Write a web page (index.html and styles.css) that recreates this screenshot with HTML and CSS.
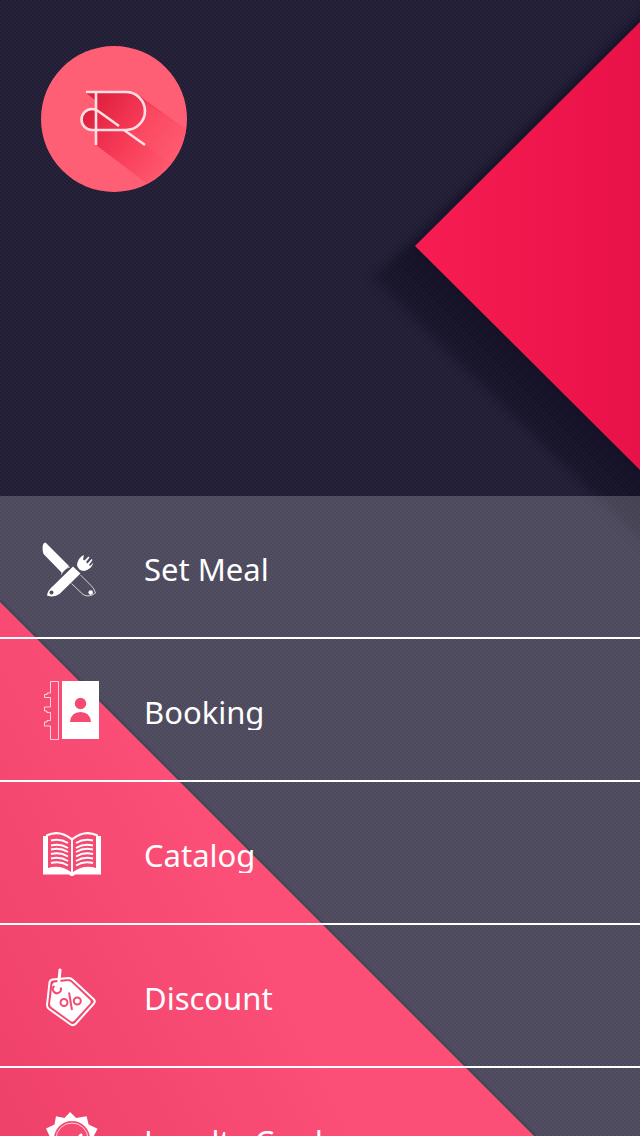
FILE: index.html
```html
<!DOCTYPE html>
<html lang="en">
<head>
<meta charset="utf-8">
<meta name="viewport" content="width=device-width, initial-scale=1">
<title>Menu</title>
<link rel="stylesheet" href="styles.css">
</head>
<body>
<div class="screen">
  <svg class="backdrop" viewBox="0 0 640 1136" preserveAspectRatio="xMidYMid slice" aria-hidden="true">
    <defs>
      <pattern id="weave" width="4" height="4" patternUnits="userSpaceOnUse">
        <rect width="4" height="4" fill="#27243c"/>
        <rect width="2" height="2" fill="#1f1c33"/>
        <rect x="2" y="2" width="2" height="2" fill="#1f1c33"/>
      </pattern>
      <linearGradient id="rightRed" x1="0" y1="0" x2="1" y2="0">
        <stop offset="0" stop-color="#f71d52"/>
        <stop offset="1" stop-color="#e81148"/>
      </linearGradient>
      <linearGradient id="leftRed" gradientUnits="userSpaceOnUse" x1="0" y1="1136" x2="300" y2="980">
        <stop offset="0" stop-color="#eb1245"/>
        <stop offset="1" stop-color="#fb2456"/>
      </linearGradient>
      <linearGradient id="shade" gradientUnits="userSpaceOnUse" x1="528" y1="358" x2="490" y2="396">
        <stop offset="0" stop-color="#110e22" stop-opacity=".75"/>
        <stop offset="1" stop-color="#110e22" stop-opacity=".4"/>
      </linearGradient>
      <filter id="soft" x="-20%" y="-20%" width="140%" height="140%" color-interpolation-filters="sRGB"><feGaussianBlur stdDeviation="5"/></filter>
    </defs>
    <rect width="640" height="1136" fill="url(#weave)"/>
    <path d="M414 240L660 -5V560L372 277Z" fill="url(#shade)" filter="url(#soft)"/>
    <path d="M415 246L640 22V470Z" fill="url(#rightRed)"/>
    <path d="M0 601L535 1136" stroke="#110e22" stroke-width="4" opacity=".5"/>
    <path d="M0 602L534 1136H0Z" fill="url(#leftRed)"/>
  </svg>

  <header class="hero">
    <svg class="logo" viewBox="0 0 146 146" role="img" aria-label="R logo">
      <defs>
        <clipPath id="disc"><circle cx="73" cy="73" r="72"/></clipPath>
        <linearGradient id="cast" gradientUnits="userSpaceOnUse" x1="50" y1="60" x2="132" y2="122">
          <stop offset="0" stop-color="#df2140"/>
          <stop offset=".5" stop-color="#f83c58"/>
          <stop offset="1" stop-color="#ff5b70"/>
        </linearGradient>
      </defs>
      <circle cx="73" cy="73" r="73" fill="#ff5f74"/>
      <g clip-path="url(#disc)">
        <path d="M45 47H86Q98 47 104 54L146 84V146H117L55 99L55 84H51A10 10 0 0 1 51 63H54V54Z" fill="url(#cast)"/>
        <path d="M104 56L146 84V130L104 99L86 84Q106 76 104 56Z" fill="#ff5f74" opacity=".35"/>
      </g>
      <g fill="none" stroke="#ffdfe4" stroke-width="2.6">
        <path d="M45 46H85A19 19 0 0 1 85 84H51A10.5 10.5 0 0 1 51 63Q54 63 57 65L78 80"/>
        <path d="M55 46V99M83 84L104 99"/>
      </g>
    </svg>
  </header>

  <nav class="menu" aria-label="Main">
    <a class="item" href="#set-meal">
      <svg class="icon" viewBox="0 0 64 64" aria-hidden="true">
        <path class="fill" d="M5.500 6.500L29 30L22 37L3.500 18Q1.500 12 3.500 7.500Z"/>
        <path class="thin" d="M21.500 38.500Q22 33 30 31"/>
        <path class="thin" d="M31.500 47.500L43 58.500Q49 62 55.500 57Q54 52 51 49.500L40.500 39"/>
        <circle class="fill" cx="50.700" cy="56.500" r="2.300"/>
        <path class="fill" d="M33 30.500L40.500 37.500L19.500 58Q14 62 7 59.500Q7.500 54.500 13 50Z"/>
        <circle class="hole-dark" cx="11.500" cy="56.500" r="2"/>
        <path class="fill" d="M44 19L43 23.500L44.500 24.500L48.500 20.500L49.500 21.500L46 26L47.500 27.500L51.500 23L52.500 24L49 29L50 30L53.500 26.500Q51 34 44 35Q38 34.500 37 29Q38 21.500 44 19Z"/>
      </svg>
      <span class="label">Set Meal</span>
    </a>
    <a class="item" href="#booking">
      <svg class="icon" viewBox="0 0 64 64" aria-hidden="true">
        <path class="thin" d="M10.500 2.500H18.500V60.500H10.500V47H4.500V43H7V41.500H10.500V33.500H7V32H4.500V28H10.500V18.500H4.500V15.500H7V14H10.500Z"/>
        <rect class="fill" x="22" y="2" width="37" height="58"/>
        <circle class="hole" cx="40.500" cy="24.500" r="5.700"/>
        <path class="hole" d="M30 43Q31 33 40.500 33T51 43Z"/>
      </svg>
      <span class="label">Booking</span>
    </a>
    <a class="item" href="#catalog">
      <svg class="icon" viewBox="0 0 64 64" aria-hidden="true">
        <path class="fill" d="M3 14H6V12.500Q19 6 32 16Q45 6 58 12.500V14H61V52.500H35Q32 55.500 29 52.500H3Z"/>
        <path class="hole" d="M8 14Q20 9 31 18V50Q20 42 8 46ZM56 14Q44 9 33 18V50Q44 42 56 46Z"/>
        <path class="rule" d="M11 18.500Q20 16 28 21M11 23.500Q20 21 28 26M11 27.500Q20 25 28 30M11 32Q20 29.500 28 34.500M11 36.500Q20 34 28 39M11 41Q20 38.500 28 43.500M53 18.500Q44 16 36 21M53 23.500Q44 21 36 26M53 27.500Q44 25 36 30M53 32Q44 29.500 36 34.500M53 36.500Q44 34 36 39M53 41Q44 38.500 36 43.500"/>
      </svg>
      <span class="label">Catalog</span>
    </a>
    <a class="item" href="#discount">
      <svg class="icon" viewBox="0 0 64 64" aria-hidden="true">
        <path class="outline" d="M12.500 14.500L28.500 13Q31 13 33 15L53.500 34Q56 36.500 53.500 39L36 58.500Q33 61.500 30 59L9 44Q7 42.500 7 40L9.500 17.500Q10 15 12.500 14.500Z"/>
        <path class="fill" d="M14 17.500L28.500 16Q30 16 31.500 17.500L50 35Q51.500 36.500 50 38.500L34.500 55.500Q32.500 57.500 30.500 56L12 42.500Q10 41 10 39L12.500 19Z"/>
        <path class="cut" d="M14.500 21A4 4 0 1 0 20.500 22.500M29 27.500L32 45"/>
        <circle class="cut" cx="24" cy="37.500" r="3.500"/>
        <circle class="cut" cx="37.300" cy="36" r="3.500"/>
        <path class="string" d="M20 5L18.500 21"/>
      </svg>
      <span class="label">Discount</span>
    </a>
    <a class="item" href="#loyalty-card">
      <svg class="icon" viewBox="0 0 64 64" aria-hidden="true">
        <path class="fill" d="M30 4L36.200 9.900L46.600 8.300L48.600 16.600L57.600 20.800L53.800 27.900L58.700 34.800L52 40.100L52.400 48.700L43.900 49.500L39.600 56.900L32 53L24.400 56.900L20.100 49.500L11.600 48.700L12 40.100L5.300 34.800L9.500 28L6 20.500L14.500 16.600L16 8.300L24.500 9.900Z"/>
        <circle class="hole" cx="32" cy="31" r="18"/>
        <circle class="thin" cx="32" cy="31" r="16"/>
        <path class="string" d="M24 34L30 40L41 27"/>
      </svg>
      <span class="label">Loyalty Card</span>
    </a>
  </nav>
</div>
</body>
</html>
```
FILE: styles.css
```css
* {
  box-sizing: border-box;
}

body {
  margin: 0;
  font-family: "Segoe UI", "Noto Sans", "Open Sans", sans-serif;
  background: #232036;
}

.screen {
  position: relative;
  display: flex;
  flex-direction: column;
  height: 100vh;
  overflow: hidden;
}

.backdrop {
  position: absolute;
  inset: 0;
  width: 100%;
  height: 100%;
}

.hero {
  position: relative;
  flex: none;
  min-height: 496px;
  padding: 46px 41px;
}

.logo {
  display: block;
  width: 146px;
  height: 146px;
}

.menu {
  position: relative;
  flex: 1;
  min-height: 0;
  overflow: hidden;
  background: rgba(255, 255, 255, 0.2);
}

.item {
  display: flex;
  align-items: center;
  gap: 40px;
  height: 143px;
  padding: 3px 40px 0;
  border-bottom: 2px solid #fff;
  color: #fff;
  text-decoration: none;
}

.icon {
  flex: none;
  width: 64px;
  height: 64px;
}

.label {
  overflow: hidden;
  padding-top: 2px;
  font-size: 31px;
  line-height: 36px;
  white-space: nowrap;
}

.fill {
  fill: #fff;
}

.hole {
  fill: #f54a72;
}

.hole-dark {
  fill: #504c5e;
}

.thin,
.rule,
.outline,
.cut,
.string {
  fill: none;
  stroke: #fff;
  stroke-width: 1;
}

.thin {
  stroke-opacity: 0.75;
}

.rule {
  stroke-width: 2;
}

.outline {
  stroke-width: 2;
}

.cut {
  stroke: #f54a72;
  stroke-width: 2;
}

.string {
  stroke-width: 3;
  stroke-linecap: round;
}
```
